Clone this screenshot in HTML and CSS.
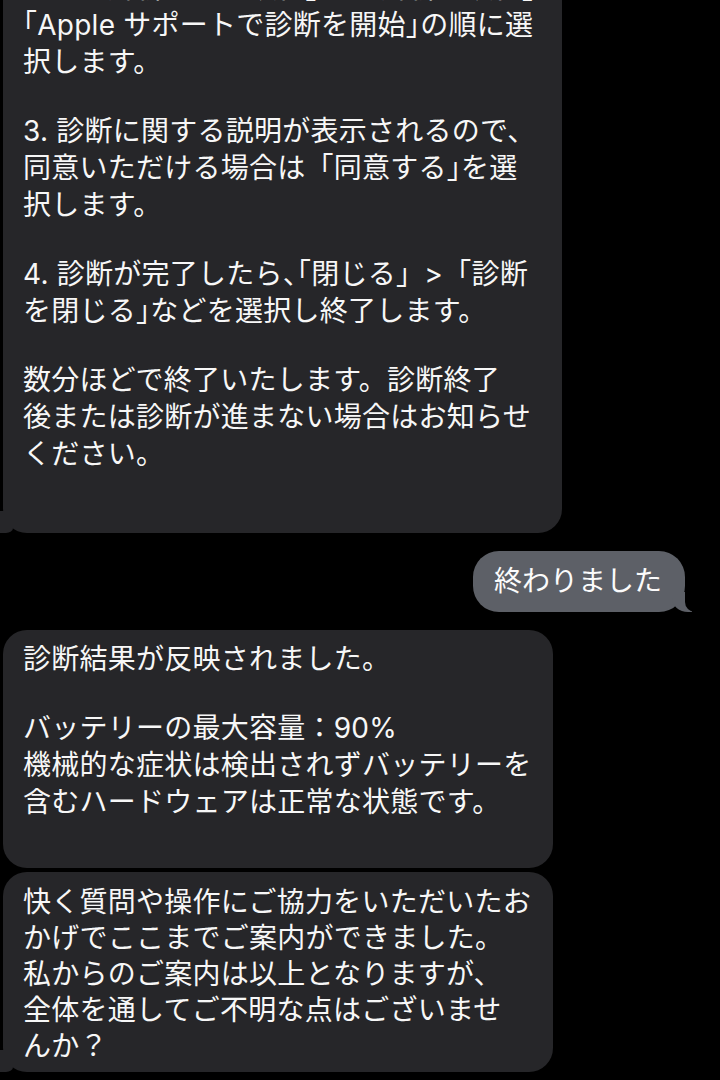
FILE: index.html
```html
<!DOCTYPE html>
<html lang="ja">
<head>
<meta charset="utf-8">
<title>Chat</title>
<link rel="stylesheet" href="styles.css">
</head>
<body>
<div class="chat">
  <div class="bubble recv tail b1">
    <div class="para">
      <div class="ln">たは「解析および改善」>「解析と改善」></div>
      <div class="ln"><span class="half">「</span>Apple サポートで診断を開始<span class="halfc">」</span>の順に選</div>
      <div class="ln">択します。</div>
    </div>
    <div class="para">
      <div class="ln">3. 診断に関する説明が表示されるので、</div>
      <div class="ln">同意いただける場合は「同意する<span class="halfc">」</span>を選</div>
      <div class="ln">択します。</div>
    </div>
    <div class="para">
      <div class="ln">4. 診断が完了したら、<span class="half">「</span>閉じる」>「診断</div>
      <div class="ln">を閉じる<span class="halfc">」</span>などを選択し終了します。</div>
    </div>
    <div class="para">
      <div class="ln">数分ほどで終了いたします。診断終了</div>
      <div class="ln">後または診断が進まない場合はお知らせ</div>
      <div class="ln">ください。</div>
    </div>
  </div>

  <div class="sent-row">
    <div class="bubble sent">終わりました</div>
  </div>

  <div class="bubble recv b2">
    <div class="para">
      <div class="ln">診断結果が反映されました。</div>
    </div>
    <div class="para">
      <div class="ln">バッテリーの最大容量：90%</div>
      <div class="ln">機械的な症状は検出されずバッテリーを</div>
      <div class="ln">含むハードウェアは正常な状態です。</div>
    </div>
  </div>

  <div class="bubble recv tail b3">
    <div class="para">
      <div class="ln">快く質問や操作にご協力をいただいたお</div>
      <div class="ln">かげでここまでご案内ができました。</div>
      <div class="ln">私からのご案内は以上となりますが、</div>
      <div class="ln">全体を通してご不明な点はございませ</div>
      <div class="ln">んか？</div>
    </div>
  </div>
</div>
</body>
</html>
```

FILE: styles.css
```css
html, body {
  margin: 0;
  padding: 0;
  background: #000;
}

body {
  width: 720px;
  height: 1080px;
  overflow: hidden;
  color: #f7f7f7;
  font-family: Inter, "Noto Sans CJK JP", sans-serif;
  font-size: 28px;
  line-height: 37px;
}

.chat {
  display: flex;
  flex-direction: column;
  align-items: flex-start;
  margin-top: -42px;
}

.bubble {
  position: relative;
  box-sizing: border-box;
}

.recv {
  background: #262629;
  border-radius: 24px;
  margin-left: 3px;
  padding: 12px 20px;
  letter-spacing: 0.25px;
}

.ln {
  white-space: nowrap;
}

/* opening bracket set half-width (left blank trimmed) */
.half {
  margin-left: -14px;
}

/* closing bracket set half-width (right blank trimmed) */
.halfc {
  margin-right: -14px;
}

.para + .para {
  margin-top: 32px;
}

.b1 {
  width: 559px;
  padding-bottom: 60px;
}

.b2 {
  width: 550px;
  margin-top: 18px;
  padding-top: 11px;
  padding-bottom: 47px;
}

.b3 {
  width: 550px;
  margin-top: 4px;
  padding-top: 12px;
  padding-bottom: 8px;
  line-height: 36px;
}

.tail::before {
  content: "";
  position: absolute;
  left: -3px;
  bottom: 0;
  width: 13px;
  height: 22px;
  background: #262629;
  border-bottom-right-radius: 7px 5px;
}

.sent-row {
  align-self: stretch;
  display: flex;
  justify-content: flex-end;
  padding-right: 35px;
  margin-top: 18px;
}

.sent {
  background: #5d6067;
  color: #fbfbfb;
  border-radius: 26px;
  padding: 12px 23px 12px 21px;
}

.sent::before {
  content: "";
  position: absolute;
  right: -7px;
  bottom: 0;
  width: 20px;
  height: 20px;
  background: #5d6067;
  border-bottom-left-radius: 16px 14px;
}

.sent::after {
  content: "";
  position: absolute;
  right: -10px;
  bottom: 0;
  width: 10px;
  height: 20px;
  background: #000;
  border-bottom-left-radius: 10px;
}
```
